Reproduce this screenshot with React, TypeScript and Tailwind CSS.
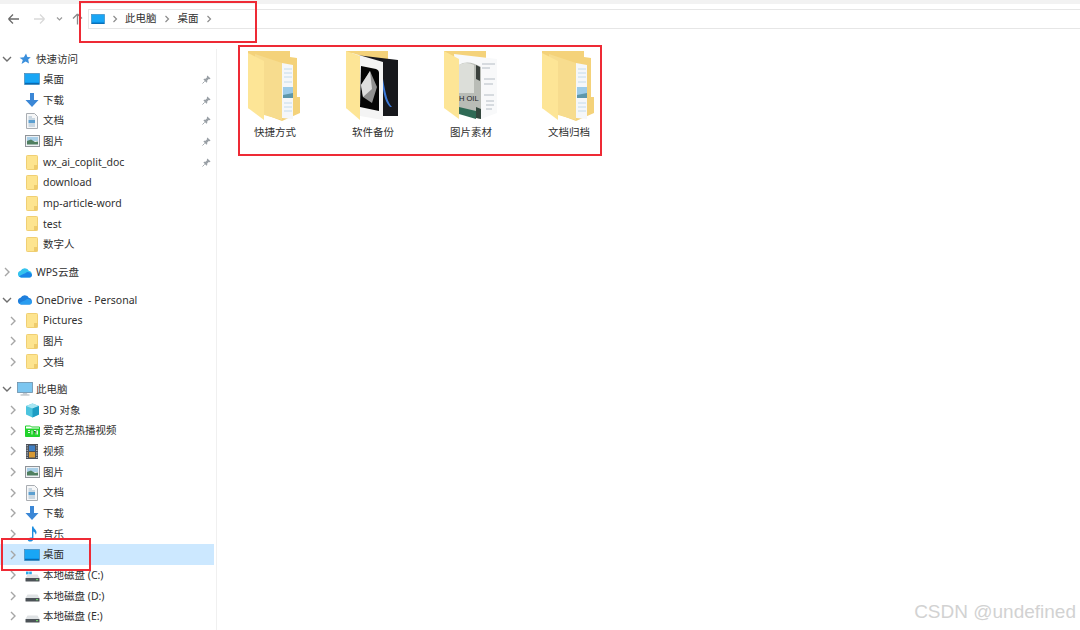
import React from "react";

const FONT = "font-['Noto_Sans','Noto_Sans_CJK_SC',sans-serif]";

function Chevron({ open }: { open?: boolean }) {
  return open ? (
    <svg width="10" height="10" viewBox="0 0 10 10" className="block">
      <path d="M1 3 L5 7 L9 3" fill="none" stroke="#6e6e6e" strokeWidth="1.4" />
    </svg>
  ) : (
    <svg width="10" height="10" viewBox="0 0 10 10" className="block">
      <path d="M3 1 L7 5 L3 9" fill="none" stroke="#a6a6a6" strokeWidth="1.4" />
    </svg>
  );
}
const CrumbChevron = () => (
  <svg width="8" height="8" viewBox="0 0 8 8" className="block">
    <path d="M2.5 1 L5.5 4 L2.5 7" fill="none" stroke="#8c8c8c" strokeWidth="1.2" />
  </svg>
);

const Desktop = ({ w = 16 }: { w?: number }) => (
  <svg width={w} height={w * 0.75} viewBox="0 0 16 12" className="block">
    <rect x="0.5" y="0.5" width="15" height="11" fill="#0a97ee" stroke="#3f7fae" strokeWidth="0.6" />
    <rect x="1" y="1" width="14" height="8" fill="#19a6f5" />
    <rect x="1" y="10" width="14" height="1.2" fill="#0b69ae" />
  </svg>
);
const Download = () => (
  <svg width="16" height="16" viewBox="0 0 16 16" className="block">
    <path d="M6 1 H10 V8 H14.5 L8 15 L1.5 8 H6 Z" fill="#3b87d6" />
  </svg>
);
const Doc = () => (
  <svg width="14" height="16" viewBox="0 0 14 16" className="block">
    <path d="M1.5 .5 H9.5 L12.5 3.5 V15.5 H1.5 Z" fill="#f6f7f8" stroke="#a9adb2" />
    <path d="M3.5 4 H7 M3.5 6 H10 M3.5 11 H10 M3.5 13 H10" stroke="#9eb7cb" strokeWidth="1" />
    <rect x="3.5" y="7" width="6.5" height="3" fill="#5c9fd0" />
  </svg>
);
const Picture = () => (
  <svg width="15" height="12" viewBox="0 0 15 12" className="block">
    <rect x="0.5" y="0.5" width="14" height="11" fill="#eef1f4" stroke="#8f9499" />
    <rect x="2" y="2" width="11" height="4" fill="#a9cfe8" />
    <path d="M2 6 L6 4.5 L10 7 L13 6.5 V9.5 H2 Z" fill="#4f7f60" />
  </svg>
);
const SmallFolder = () => (
  <svg width="12" height="15" viewBox="0 0 12 15" className="block">
    <rect x="0.5" y="0.5" width="11" height="14" rx="0.8" fill="#fde48f" stroke="#f0cf73" />
    <rect x="8" y="10" width="3.5" height="4.5" fill="#eecb6c" />
  </svg>
);
const Pin = () => (
  <svg width="9" height="9" viewBox="0 0 10 10" className="block">
    <path d="M6 0.5 L9.5 4 L8.5 4.6 L7.5 4.4 L5.8 6.1 L5.8 7.8 L5 8.5 L1.6 5 L2.3 4.2 L4 4.2 L5.6 2.5 L5.4 1.5 Z" fill="#9aa0a6" />
    <path d="M3 7 L0.5 9.5" stroke="#9aa0a6" strokeWidth="1" />
  </svg>
);
const Star = () => (
  <svg width="12" height="12" viewBox="0 0 12 12" className="block">
    <path d="M7 0.5 L8.4 4 L11.8 4.3 L9.2 6.6 L10 10.5 L6.6 8.5 L2.5 11 L3.8 7 L0.6 4.8 L4.8 4.2 Z" fill="#3a8fdc" />
  </svg>
);
const Cloud = ({ a, b }: { a: string; b: string }) => (
  <svg width="16" height="11" viewBox="0 0 16 11" className="block">
    <path d="M4 10.5 A3.4 3.4 0 0 1 3.6 3.8 A4.6 4.6 0 0 1 12 4 A3.3 3.3 0 0 1 12.2 10.5 Z" fill={a} />
    <path d="M2 9.5 C5 7 8 7 10 5 C12 4.5 15 6 15 8 C15 10 13.5 10.5 12 10.5 H4 Z" fill={b} />
  </svg>
);
const Monitor = () => (
  <svg width="16" height="14" viewBox="0 0 16 14" className="block">
    <rect x="0.5" y="0.5" width="15" height="10" fill="#7cc6f0" stroke="#6b8ea8" strokeWidth="0.8" />
    <path d="M6 11 H10 L10.5 12.5 H5.5 Z" fill="#c5ccd2" />
    <rect x="3.5" y="12.5" width="9" height="1" fill="#aab2b8" />
  </svg>
);
const Cube = () => (
  <svg width="15" height="15" viewBox="0 0 15 15" className="block">
    <path d="M7.5 0.5 L14 3 V11.5 L7.5 14.5 L1 11.5 V3 Z" fill="#4cc4de" />
    <path d="M7.5 0.5 L14 3 L7.5 5.5 L1 3 Z" fill="#a8e6f2" />
    <path d="M7.5 5.5 L14 3 V11.5 L7.5 14.5 Z" fill="#1d9dc4" />
  </svg>
);
const Iqiyi = () => (
  <svg width="15" height="13" viewBox="0 0 15 13" className="block">
    <path d="M0.5 2 H5.5 L6.5 3 H14.5 V12.5 H0.5 Z" fill="#fff" stroke="#1fd02a" strokeWidth="1" />
    <rect x="0.5" y="4.5" width="14" height="8" fill="#22d32c" />
    <path d="M3 6.5 H5 M3 8.5 H5 M7 6.5 V10.5 M9 6.5 H11 V10.5 M12.5 6.5 V10.5" stroke="#fff" strokeWidth="0.9" />
  </svg>
);
const Film = () => (
  <svg width="12" height="15" viewBox="0 0 12 15" className="block">
    <rect x="0" y="0" width="12" height="15" fill="#4b5058" />
    <rect x="3" y="1.5" width="6" height="5.5" fill="#3f7fc4" />
    <rect x="3" y="8" width="6" height="5.5" fill="#d89a35" />
    <path d="M1.2 1 V14 M10.8 1 V14" stroke="#c8ccd0" strokeWidth="1.1" strokeDasharray="1.2 1.2" />
  </svg>
);
const Music = () => (
  <svg width="11" height="16" viewBox="0 0 11 16" className="block">
    <path d="M5 0.5 H6.4 C6.6 3 9.5 3.5 9.5 6.5 C9.5 7.5 9 8.2 8.5 8.6 C8.5 6.8 7.4 5.8 6.4 5.4 V13 C6.4 14.6 4.6 15.6 3 15.6 C1.6 15.6 0.8 14.8 0.8 13.8 C0.8 12.4 2.4 11.4 3.8 11.4 C4.2 11.4 4.6 11.5 5 11.6 Z" fill="#1f8fe0" />
  </svg>
);
const Disk = ({ win }: { win?: boolean }) => (
  <svg width="15" height="13" viewBox="0 0 15 13" className="block">
    {win && (
      <g fill="#29a8e8">
        <rect x="1" y="0" width="2.6" height="2.4" />
        <rect x="4.2" y="0" width="2.6" height="2.4" />
        <rect x="1" y="3" width="2.6" height="2.4" />
        <rect x="4.2" y="3" width="2.6" height="2.4" />
      </g>
    )}
    <path d="M2.5 5.5 H12.5 L14.5 9 H0.5 Z" fill="#dfe2e4" />
    <rect x="0.5" y="9" width="14" height="3.5" rx="0.6" fill="#4c5257" />
    <rect x="11" y="10" width="2" height="1.2" fill="#6fd06a" />
  </svg>
);

function Row({
  level = 1,
  icon,
  label,
  chevron,
  pin,
  selected,
}: {
  level?: 0 | 1;
  icon: React.ReactNode;
  label: string;
  chevron?: "open" | "closed";
  pin?: boolean;
  selected?: boolean;
}) {
  return (
    <div className={`flex items-center h-[20.65px] w-[214px] ${selected ? "bg-[#cce8ff]" : ""}`}>
      <div className={`flex items-center shrink-0 ${level === 0 ? "w-[17px] pl-[2px]" : "w-[24px] pl-[8px]"}`}>
        {chevron && <Chevron open={chevron === "open"} />}
      </div>
      <div className="w-[16px] flex justify-center shrink-0">{icon}</div>
      <span className="ml-[3px] text-[10.5px] leading-none text-[#303030] whitespace-pre flex-1">{label}</span>
      {pin && (
        <span className="mr-[3px]">
          <Pin />
        </span>
      )}
    </div>
  );
}

function FolderOpenDoc() {
  return (
    <svg width="54" height="72" viewBox="0 0 54 72" className="block">
      <path d="M0 0 H42 V6 L49 7 V46 H52 V62 L34 70 L0 57 Z" fill="#f4d27a" />
      <path d="M34 12 L45 14 V68 L34 67 Z" fill="#f5f7f9" />
      <path d="M36 18 H44 M36 22 H44 M36 26 H44 M36 31 H44 M36 52 H44 M36 56 H44 M36 60 H44" stroke="#c4dbea" strokeWidth="1" />
      <path d="M35 36 H45 V47 H35 Z" fill="#9ccbe8" />
      <path d="M35 44 L45 42 V47 H35 Z" fill="#5d97aa" />
      <path d="M7 3 L34 12 V69 L16 64 L7 40 Z" fill="#f7dc8e" />
      <path d="M0 2 L16 10 V69 L0 57 Z" fill="#fde596" />
    </svg>
  );
}
function FolderBlack() {
  return (
    <svg width="54" height="72" viewBox="0 0 54 72" className="block">
      <path d="M0 0 H42 V10 L30 66 L0 57 Z" fill="#f4d27a" />
      <path d="M10 4 L52 9 V65 L37 65 Z" fill="#17181c" />
      <path d="M37 28 C40 45 42 52 46 56 L44 56 C40 52 38 45 37 38 Z" fill="#3a78d8" />
      <path d="M6 2 L37 11 V69 L14 65 Z" fill="#f4f4f4" />
      <path d="M15 15 L30 18 Q33 19 33 22 V60 L14 56 Z" fill="#050505" />
      <path d="M24 20 L31 36 L26 52 L17 46 L15 34 Z" fill="#8f8f8f" />
      <path d="M24 20 L26 38 L17 46 L15 34 Z" fill="#dedede" />
      <path d="M0 0 L14 5 V69 L0 57 Z" fill="#fde596" />
    </svg>
  );
}
function FolderOil() {
  return (
    <svg width="54" height="72" viewBox="0 0 54 72" className="block">
      <path d="M0 0 H42 V8 L30 60 L0 57 Z" fill="#f4d27a" />
      <path d="M10 3 L53 8 V62 L37 68 L14 62 Z" fill="#f8f9fa" />
      <path d="M38 13 H51 M38 17 H46 M40 28 H51 M40 33 H49 M40 44 H50 M42 50 H50 M42 54 H50 M42 58 H48" stroke="#b4bcc4" strokeWidth="1" />
      <path d="M15 14 C22 9 30 12 37 16 V68 L15 62 Z" fill="#b9bcb6" />
      <path d="M15 14 C20 11 26 12 30 14 V42 L15 42 Z" fill="#dcded9" />
      <path d="M32 14 L36 16 V30 L32 28 Z" fill="#3a403c" />
      <path d="M15 56 L32 60 V68 L15 63 Z" fill="#2f6a55" />
      <path d="M32 56 L37 58 V68 L32 67 Z" fill="#33473d" />
      <text x="15" y="50" fontSize="7.5" fontFamily="'Liberation Sans',sans-serif" fill="#222">H OIL</text>
      <path d="M0 0 L15 8 V68 L0 57 Z" fill="#fde596" />
    </svg>
  );
}

function Tile({ label, art }: { label: string; art: React.ReactNode }) {
  return (
    <div className="w-[98px] flex flex-col items-center">
      {art}
      <span className="mt-[1.5px] text-[10.5px] leading-[15px] text-[#303030] whitespace-nowrap">{label}</span>
    </div>
  );
}

export default function App() {
  return (
    <div className={`relative w-[1080px] h-[630px] overflow-hidden bg-white flex flex-col ${FONT}`}>
      <div className="h-[4px] bg-[#f2f2f2] shrink-0" />
      <div className="h-[44.5px] shrink-0 flex items-start pt-[5px]">
        <div className="flex items-center h-[20px] w-[88px] shrink-0">
          <svg width="88" height="20" viewBox="0 0 88 20" className="block">
            <path d="M8.5 10 H19 M8.5 10 L13 5.5 M8.5 10 L13 14.5" fill="none" stroke="#6b6b6b" strokeWidth="1.3" />
            <path d="M34 10 H44.5 M44.5 10 L40 5.5 M44.5 10 L40 14.5" fill="none" stroke="#d9d9d9" strokeWidth="1.3" />
            <path d="M57 8.5 L59.5 11 L62 8.5" fill="none" stroke="#9a9a9a" strokeWidth="1.2" />
            <path d="M77.5 15.5 V5 M77.5 5 L73 9.5 M77.5 5 L82 9.5" fill="none" stroke="#8a8a8a" strokeWidth="1.3" />
          </svg>
        </div>
        <div className="flex-1 h-[20px] border border-[#e6e6e6] border-r-0 flex items-center pl-[2px] text-[10.5px] text-[#303030]">
          <Desktop w={14} />
          <span className="ml-[6px]"><CrumbChevron /></span>
          <span className="ml-[6px]">此电脑</span>
          <span className="ml-[6px]"><CrumbChevron /></span>
          <span className="ml-[7px]">桌面</span>
          <span className="ml-[6px]"><CrumbChevron /></span>
        </div>
      </div>

      <div className="flex flex-1 min-h-0">
        <aside className="w-[217px] shrink-0 border-r border-[#f0f0f0] flex flex-col gap-[7px]">
          <div>
            <Row level={0} chevron="open" icon={<Star />} label="快速访问" />
            <Row icon={<Desktop />} label="桌面" pin />
            <Row icon={<Download />} label="下载" pin />
            <Row icon={<Doc />} label="文档" pin />
            <Row icon={<Picture />} label="图片" pin />
            <Row icon={<SmallFolder />} label="wx_ai_coplit_doc" pin />
            <Row icon={<SmallFolder />} label="download" />
            <Row icon={<SmallFolder />} label="mp-article-word" />
            <Row icon={<SmallFolder />} label="test" />
            <Row icon={<SmallFolder />} label="数字人" />
          </div>
          <div>
            <Row level={0} chevron="closed" icon={<Cloud a="#35c3ee" b="#1a86e8" />} label="WPS云盘" />
          </div>
          <div>
            <Row level={0} chevron="open" icon={<Cloud a="#1f7fdc" b="#2a9df0" />} label="OneDrive  - Personal" />
            <Row chevron="closed" icon={<SmallFolder />} label="Pictures" />
            <Row chevron="closed" icon={<SmallFolder />} label="图片" />
            <Row chevron="closed" icon={<SmallFolder />} label="文档" />
          </div>
          <div>
            <Row level={0} chevron="open" icon={<Monitor />} label="此电脑" />
            <Row chevron="closed" icon={<Cube />} label="3D 对象" />
            <Row chevron="closed" icon={<Iqiyi />} label="爱奇艺热播视频" />
            <Row chevron="closed" icon={<Film />} label="视频" />
            <Row chevron="closed" icon={<Picture />} label="图片" />
            <Row chevron="closed" icon={<Doc />} label="文档" />
            <Row chevron="closed" icon={<Download />} label="下载" />
            <Row chevron="closed" icon={<Music />} label="音乐" />
            <Row chevron="closed" icon={<Desktop />} label="桌面" selected />
            <Row chevron="closed" icon={<Disk win />} label="本地磁盘 (C:)" />
            <Row chevron="closed" icon={<Disk />} label="本地磁盘 (D:)" />
            <Row chevron="closed" icon={<Disk />} label="本地磁盘 (E:)" />
          </div>
        </aside>
        <main className="flex-1 pl-[9px] pt-[2.5px] flex items-start">
          <Tile label="快捷方式" art={<FolderOpenDoc />} />
          <Tile label="软件备份" art={<FolderBlack />} />
          <Tile label="图片素材" art={<FolderOil />} />
          <Tile label="文档归档" art={<FolderOpenDoc />} />
        </main>
      </div>

      {/* red annotation boxes over the screenshot */}
      <div className="absolute left-[79px] top-[1px] w-[178px] h-[42px] border-2 border-[#ee2a35]" />
      <div className="absolute left-[238px] top-[45px] w-[364px] h-[111px] border-2 border-[#ee2a35]" />
      <div className="absolute left-[1px] top-[538px] w-[90px] h-[33px] border-2 border-[#ee2a35]" />

      <div className="absolute right-[4px] top-[601px] text-[19px] leading-[22px] text-[#d2d2d2] font-['Liberation_Sans',sans-serif]">
        CSDN @undefined
      </div>
    </div>
  );
}
